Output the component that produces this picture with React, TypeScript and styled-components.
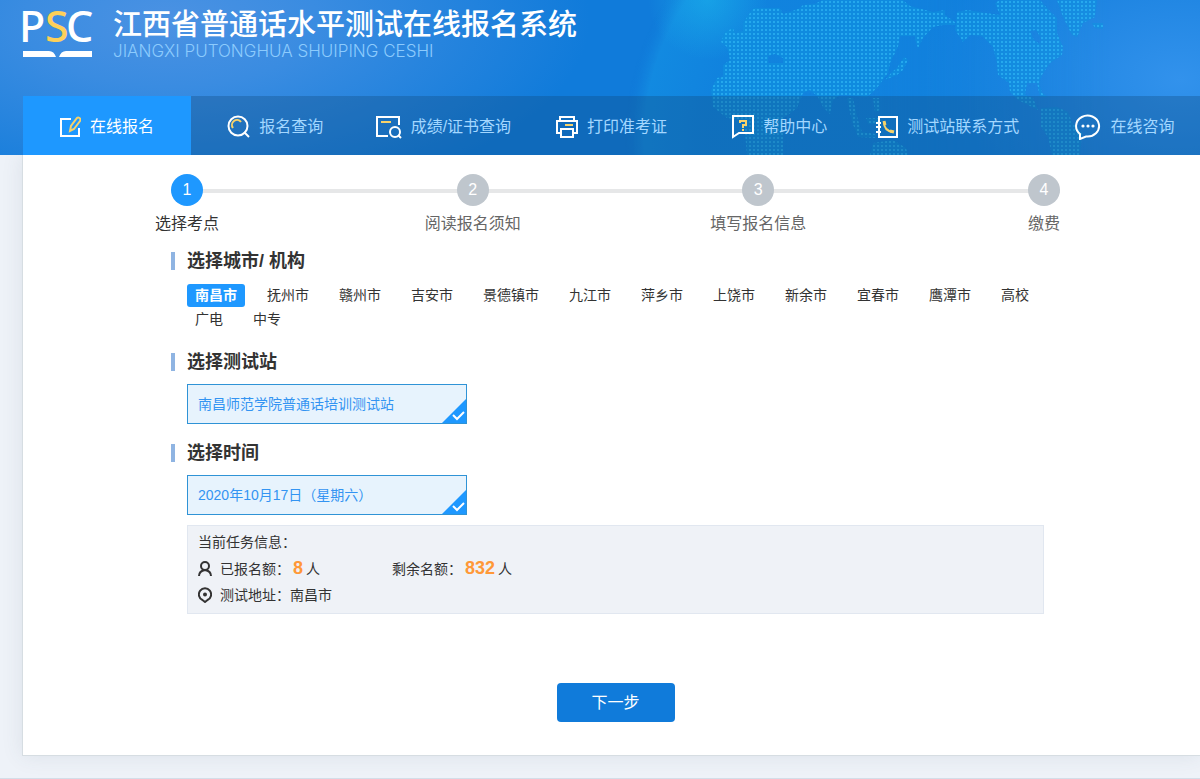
import React, { useState } from "react";
import styled, { createGlobalStyle } from "styled-components";

const GlobalStyle = createGlobalStyle`
  *, *::before, *::after { box-sizing: border-box; }
  body {
    margin: 0;
    background: #eef2f8;
    color: #333;
    font: 14px/24px "Liberation Sans", "Noto Sans CJK SC", sans-serif;
  }
  h1, h2, p, ul, ol { margin: 0; padding: 0; }
  ul, ol { list-style: none; }
  button { font: inherit; border: 0; padding: 0; cursor: pointer; }
`;

/* ---------- header ---------- */

const Header = styled.header`
  position: relative;
  overflow: hidden;
  background:
    radial-gradient(ellipse 420px 190px at 170px 20px, #4b92e3 0%, #3a8ce1 35%, rgba(16, 124, 219, 0) 100%),
    radial-gradient(ellipse 260px 170px at calc(100% - 20px) 80px, #3292ec 0%, rgba(18, 126, 222, 0) 100%),
    #107bda;
`;

const Globe = styled.svg`
  position: absolute;
  top: 0;
  right: 0;
  width: 600px;
  height: 155px;
`;

const Brand = styled.div`
  position: relative;
  display: flex;
  gap: 21px;
  height: 96px;
  padding: 8px 23px 0;
`;

const Logo = styled.svg`
  flex: none;
  width: 69px;
  height: 50px;
  overflow: visible;
`;

const BrandText = styled.div`
  display: flex;
  flex-direction: column;
  white-space: nowrap;
`;

const SiteName = styled.h1`
  color: #fff;
  font-family: "Noto Sans CJK SC", sans-serif;
  font-size: 29px;
  font-weight: 500;
  line-height: 28px;
`;

const SiteLatin = styled.p`
  color: #8ccbfd;
  font-family: Inter, "Liberation Sans", sans-serif;
  font-size: 17px;
  font-weight: 300;
  line-height: 30px;
`;

const Nav = styled.nav`
  position: relative;
  display: grid;
  grid-template-columns: repeat(7, 1fr);
  margin-left: 23px;
  background: rgba(14, 72, 122, 0.32);
`;

const NavLink = styled.a<{ $active?: boolean }>`
  display: flex;
  align-items: center;
  justify-content: center;
  gap: 9px;
  height: 59px;
  padding-top: 2px;
  color: ${(p) => (p.$active ? "#fff" : "#a3d7ff")};
  background: ${(p) => (p.$active ? "#1e98ff" : "transparent")};
  font-size: 16px;
  text-decoration: none;
  white-space: nowrap;
  &:last-child { padding-left: 18px; }
`;

const NavIcon = styled.svg`
  flex: none;
  height: 26px;
  fill: none;
  stroke: #fff;
  stroke-width: 2;
`;

/* ---------- page ---------- */

const Page = styled.main`
  padding: 0 0 22px 22px;
  border-bottom: 1px solid #d3dde8;
`;

const Panel = styled.section`
  padding: 19px 156px 33px 148px;
  background: #fff;
  border-left: 1px solid #d6dde2;
  border-bottom: 1px solid #d6dde2;
  box-shadow: 0 0 20px rgba(60, 80, 100, 0.1);
`;

const Steps = styled.ol`
  display: flex;
  justify-content: space-between;
  margin-right: -16px;
  background: linear-gradient(#e6e7e8, #e6e7e8) 0 15px / 100% 4px no-repeat;
`;

const Step = styled.li<{ $active?: boolean }>`
  display: flex;
  flex-direction: column;
  align-items: center;
  gap: 6px;
  width: 32px;
  color: ${(p) => (p.$active ? "#333" : "#666")};
  font-size: 16px;
  white-space: nowrap;
`;

const StepDot = styled.span<{ $active?: boolean }>`
  width: 32px;
  border-radius: 50%;
  background: ${(p) => (p.$active ? "#1e98ff" : "#bfc6cd")};
  color: #fff;
  line-height: 32px;
  text-align: center;
`;

const SectionTitle = styled.h2`
  margin: 20px 0 13px;
  padding-left: 12px;
  border-left: 4px solid #8fb4e2;
  font-size: 18px;
  line-height: 18px;
  ${Steps} + & { margin-top: 16px; }
`;

const Cities = styled.div`
  display: flex;
  flex-wrap: wrap;
  gap: 1px 14px;
  padding: 1px 0 2px 16px;
`;

const City = styled.button<{ $active?: boolean }>`
  height: 23px;
  padding: 0 8px;
  border-radius: 3px;
  background: ${(p) => (p.$active ? "#1e98ff" : "transparent")};
  color: ${(p) => (p.$active ? "#fff" : "#333")};
  font-weight: ${(p) => (p.$active ? 700 : 400)};
  line-height: 23px;
`;

const Option = styled.label`
  position: relative;
  display: block;
  width: 280px;
  margin-left: 16px;
  padding: 0 10px;
  border: 1px solid #2f93d6;
  background: #e7f3fd;
  color: #3394f2;
  line-height: 38px;
  cursor: pointer;
`;

const HiddenRadio = styled.input`
  position: absolute;
  opacity: 0;
  pointer-events: none;
`;

const Corner = styled.svg`
  position: absolute;
  right: 0;
  bottom: 0;
  width: 24px;
  height: 24px;
`;

const Info = styled.div`
  margin: 10px 0 0 16px;
  padding: 3px 10px 5px;
  border: 1px solid #e1e7f0;
  background: #eff2f7;
`;

const InfoRow = styled.div`
  display: flex;
  align-items: center;
  gap: 8px;
  line-height: 26px;
`;

const Registered = styled.span`
  width: 164px;
`;

const Count = styled.strong`
  margin: 0 3px;
  color: #ff9838;
  font-size: 18px;
`;

const InfoIcon = styled.svg`
  width: 14px;
  height: 16px;
  fill: none;
  stroke: #333;
  stroke-width: 2;
`;

const Actions = styled.div`
  display: flex;
  justify-content: center;
  padding: 69px 0 0 16px;
`;

const NextButton = styled.button`
  width: 118px;
  border-radius: 4px;
  background: #107bda;
  color: #fff;
  font-size: 16px;
  line-height: 39px;
`;

/* ---------- data ---------- */

const GOLD = "#f7d26a";

const NAV = [
  {
    label: "在线报名",
    width: 21,
    icon: (
      <>
        <path d="M11 5H1v17h18v-8" />
        <path d="M10 17l1-5 6-8q1-1 2.500 0t.5 3l-6 8z" stroke={GOLD} />
      </>
    ),
  },
  {
    label: "报名查询",
    width: 23,
    icon: (
      <>
        <circle cx="11" cy="12" r="9.500" />
        <path d="M17 18l5 5" />
        <path d="M6 14a5 5 0 0 1 8-6" stroke={GOLD} />
      </>
    ),
  },
  {
    label: "成绩/证书查询",
    width: 26,
    icon: (
      <>
        <path d="M12 22H1V3h22v8" />
        <circle cx="19" cy="18" r="5" />
        <path d="M22 21l3 3" />
        <path d="M5 8h10" stroke={GOLD} />
      </>
    ),
  },
  {
    label: "打印准考证",
    width: 22,
    icon: (
      <>
        <path d="M4 6V3h14v3M5 19H1V7h20v12h-4" />
        <path d="M5 15h12v8H5z" />
        <path d="M9 11h8" stroke={GOLD} />
      </>
    ),
  },
  {
    label: "帮助中心",
    width: 22,
    icon: (
      <>
        <path d="M1 2h20v17H7l-6 4z" />
        <path d="M8 9V7h6v4h-3v3M10 16h2" stroke={GOLD} />
      </>
    ),
  },
  {
    label: "测试站联系方式",
    width: 22,
    icon: (
      <>
        <path d="M3 3h18v20H3zM0 9h5M0 13h5M0 18h5" />
        <path d="M8 8q0 9 9 10" stroke={GOLD} />
        <path d="M8 7l1 4M14 17l4 1" stroke={GOLD} strokeWidth="3" />
      </>
    ),
  },
  {
    label: "在线咨询",
    width: 26,
    icon: (
      <>
        <path d="M5 25v-5a11.500 10.500 0 1 1 6 2.500z" />
        <g fill="#fff" stroke="none">
          <circle cx="8" cy="12" r="1.600" />
          <circle cx="13" cy="12" r="1.600" />
          <circle cx="18" cy="12" r="1.600" />
        </g>
      </>
    ),
  },
];

const STEPS = ["选择考点", "阅读报名须知", "填写报名信息", "缴费"];

const CITIES = [
  "南昌市", "抚州市", "赣州市", "吉安市", "景德镇市", "九江市", "萍乡市",
  "上饶市", "新余市", "宜春市", "鹰潭市", "高校", "广电", "中专",
];

const LAND = [
  // Europe, Africa and Asia
  "M755 8H780L783 14 790 12 800 8 803 5 815 4 822 0H903L910 6 933 12 945 10V15L955 22V25H943L933 27 923 38 918 48 915 40V36L900 36 898 47 890 63 888 73 877 88 867 97 845 95H840L833 100 830 114 823 107 818 97 810 90 803 93 797 108 788 115 783 118V155H747L745 133 743 120 727 118 713 107 711 90 717 78 723 77V65L730 60 727 47 721 42 725 32 733 28 735 34 743 31V23L752 10ZM768 56L775 54 783 58V63H768Z",
  // Japan
  "M904 57L908 60 903 70 897 75 885 80 892 72 897 68Z",
  // South-east Asia and Australia
  "M847 98H853L858 120 862 132 876 134V138L858 137 852 122Z",
  "M873 98H879L880 110 875 112ZM866 118H878V124H868Z",
  "M873 143L893 140 906 148 908 155H870Z",
  // North America
  "M957 12L967 10 980 12 993 14 1000 15 995 3 1000 0H1040L1047 8 1057 18V33L1063 47 1062 55 1050 63 1042 75 1039 83 1042 93 1048 97H1040L1037 83H1027L1025 95 1033 98 1038 110 1018 100 1010 92 1009 83 998 75 997 63 993 47 982 36 970 35 963 42 955 30ZM1030 31L1036 30 1041 38 1040 44 1034 40Z",
  // Greenland and Iceland
  "M1057 0H1097L1095 17 1083 23 1077 37 1072 35 1063 17ZM1092 23H1103V29L1095 28Z",
  // South America
  "M1041 108L1057 107 1068 112 1072 122 1082 133 1080 155H1052L1048 137 1041 127Z",
].join("");

function OptionCard({ name, text }: { name: string; text: string }) {
  return (
    <Option>
      <HiddenRadio type="radio" name={name} defaultChecked />
      {text}
      <Corner viewBox="0 0 24 24" aria-hidden="true">
        <path d="M24 0v24H0z" fill="#1e98ff" />
        <path d="M11 16l4 4 7-7" fill="none" stroke="#fff" strokeWidth="2" />
      </Corner>
    </Option>
  );
}

function GlobeArt() {
  return (
    <Globe viewBox="600 0 600 155" aria-hidden="true">
      <defs>
        <pattern id="dots" width="4" height="4" patternUnits="userSpaceOnUse">
          <rect width="2" height="2" x="1" y="1" fill="#2bb2f2" />
        </pattern>
        <radialGradient id="sphere" gradientUnits="userSpaceOnUse" cx="895" cy="140" r="270">
          <stop offset="0" stopColor="#1386e0" stopOpacity="0.7" />
          <stop offset="0.7" stopColor="#1286df" stopOpacity="0.7" />
          <stop offset="0.93" stopColor="#1490e3" stopOpacity="0.7" />
          <stop offset="0.96" stopColor="#1286df" stopOpacity="0.5" />
          <stop offset="1" stopColor="#107bda" stopOpacity="0" />
        </radialGradient>
        <radialGradient id="flare" gradientUnits="userSpaceOnUse" cx="708" cy="0" r="60">
          <stop offset="0" stopColor="#1ec6f0" stopOpacity="0.4" />
          <stop offset="1" stopColor="#1ec6f0" stopOpacity="0" />
        </radialGradient>
        <linearGradient id="fade" x1="0" x2="1">
          <stop offset="0.45" stopColor="#fff" />
          <stop offset="0.85" stopColor="#fff" stopOpacity="0" />
        </linearGradient>
        <mask id="left" maskUnits="userSpaceOnUse" x="600" y="0" width="600" height="155">
          <rect x="600" width="600" height="155" fill="url(#fade)" />
        </mask>
      </defs>
      <circle cx="895" cy="140" r="270" fill="url(#sphere)" mask="url(#left)" />
      <circle cx="708" cy="0" r="60" fill="url(#flare)" />
      <path d={LAND} fill="#0d94e0" fillRule="evenodd" opacity="0.5" />
      <path d={LAND} fill="url(#dots)" fillRule="evenodd" opacity="0.75" />
    </Globe>
  );
}

export default function App() {
  const [city, setCity] = useState(CITIES[0]);

  return (
    <>
      <GlobalStyle />
      <Header>
        <GlobeArt />
        <Brand>
          <Logo viewBox="0 0 69 50" role="img" aria-label="PSC">
            <text y="34" fill="#fff" fontFamily="Noto Sans" fontSize="43" fontWeight="500">
              <tspan x="-4">P</tspan>
              <tspan x="22" fill="#fdd05a">S</tspan>
              <tspan x="43">C</tspan>
            </text>
            <path d="M0 43h26q5 0 7 6H0zM69 43H43q-5 0-7 6h33z" fill="#fff" />
          </Logo>
          <BrandText>
            <SiteName>江西省普通话水平测试在线报名系统</SiteName>
            <SiteLatin>JIANGXI PUTONGHUA SHUIPING CESHI</SiteLatin>
          </BrandText>
        </Brand>
        <Nav>
          {NAV.map((item, i) => (
            <NavLink key={item.label} href="#" $active={i === 0}>
              <NavIcon width={item.width} viewBox={`0 0 ${item.width} 26`} aria-hidden="true">
                {item.icon}
              </NavIcon>
              {item.label}
            </NavLink>
          ))}
        </Nav>
      </Header>

      <Page>
        <Panel>
          <Steps>
            {STEPS.map((label, i) => (
              <Step key={label} $active={i === 0}>
                <StepDot $active={i === 0}>{i + 1}</StepDot>
                {label}
              </Step>
            ))}
          </Steps>

          <SectionTitle>选择城市/ 机构</SectionTitle>
          <Cities>
            {CITIES.map((name) => (
              <City key={name} type="button" $active={name === city} onClick={() => setCity(name)}>
                {name}
              </City>
            ))}
          </Cities>

          <SectionTitle>选择测试站</SectionTitle>
          <OptionCard name="station" text="南昌师范学院普通话培训测试站" />

          <SectionTitle>选择时间</SectionTitle>
          <OptionCard name="date" text="2020年10月17日（星期六）" />

          <Info>
            <InfoRow>当前任务信息：</InfoRow>
            <InfoRow>
              <InfoIcon viewBox="0 0 14 16" aria-hidden="true">
                <circle cx="7" cy="5" r="4" />
                <path d="M1 15q0-5 6-6 6 1 6 6" />
              </InfoIcon>
              <Registered>
                已报名额：<Count>8</Count>人
              </Registered>
              <span>
                剩余名额：<Count>832</Count>人
              </span>
            </InfoRow>
            <InfoRow>
              <InfoIcon viewBox="0 0 14 16" aria-hidden="true">
                <path d="M7 15L4.500 13a6.100 6.100 0 1 1 5 0z" />
                <circle cx="7" cy="7.500" r="1" />
              </InfoIcon>
              测试地址：南昌市
            </InfoRow>
          </Info>

          <Actions>
            <NextButton type="button">下一步</NextButton>
          </Actions>
        </Panel>
      </Page>
    </>
  );
}
